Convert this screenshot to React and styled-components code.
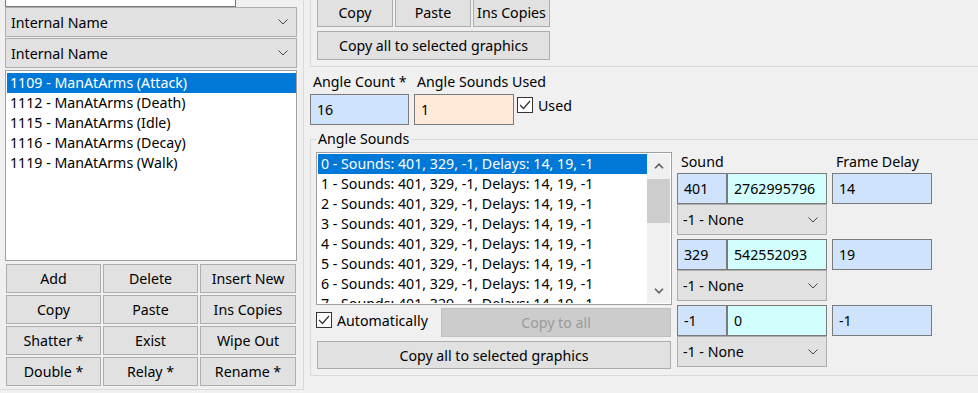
import React from 'react';
import styled, { createGlobalStyle } from 'styled-components';

const graphics = [
    '1109 - ManAtArms (Attack)',
    '1112 - ManAtArms (Death)',
    '1115 - ManAtArms (Idle)',
    '1116 - ManAtArms (Decay)',
    '1119 - ManAtArms (Walk)',
];

const angleSounds = Array.from({ length: 8 }, (_, i) => `${i} - Sounds: 401, 329, -1, Delays: 14, 19, -1`);

const soundEntries = [
    { id: '401', hash: '2762995796', delay: '14' },
    { id: '329', hash: '542552093', delay: '19' },
    { id: '-1', hash: '0', delay: '-1' },
];

const graphicButtons = ['Add', 'Delete', 'Insert New', 'Copy', 'Paste', 'Ins Copies', 'Shatter *', 'Exist', 'Wipe Out', 'Double *', 'Relay *', 'Rename *'];

const Chevron = () => (
    <svg width="10" height="6" viewBox="0 0 10 6">
        <path d="M0.5 0.5 L5 5 L9.5 0.5" fill="none" stroke="#444" strokeWidth="1" />
    </svg>
);

const ArrowIcon = ({ up }) => (
    <svg width="10" height="6" viewBox="0 0 10 6">
        <path d={up ? 'M1 5.2 L5 1.2 L9 5.2' : 'M1 0.8 L5 4.8 L9 0.8'} fill="none" stroke="#606060" strokeWidth="1.6" />
    </svg>
);

const CheckMark = () => (
    <svg width="14" height="14" viewBox="0 0 14 14">
        <path d="M2 7 L5.5 10.5 L12 3" fill="none" stroke="#333" strokeWidth="1.2" />
    </svg>
);

const App = () => {
    return (
        <>
            <GlobalStyle />
            <Screen>
                <LeftPanel>
                    <NameBox />
                    <Select $w={292} $h={30}>Internal Name<Chevron /></Select>
                    <Select $w={292} $h={30} $mt={1}>Internal Name<Chevron /></Select>
                    <GraphicList>
                        {graphics.map((g, i) => (
                            <ListItem key={g} $selected={i === 0}>{g}</ListItem>
                        ))}
                    </GraphicList>
                    <ButtonGrid>
                        {graphicButtons.map((b) => (
                            <Button key={b}>{b}</Button>
                        ))}
                    </ButtonGrid>
                </LeftPanel>

                <RightArea>
                    <TopGroup>
                        <TopButtons>
                            <Button>Copy</Button>
                            <Button>Paste</Button>
                            <Button>Ins Copies</Button>
                        </TopButtons>
                        <Button $w={233}>Copy all to selected graphics</Button>
                    </TopGroup>

                    <AngleRow>
                        <LabeledField $w={99}>
                            <FieldLabel>Angle Count *</FieldLabel>
                            <Field $w={99} $bg="#cfe3fc">16</Field>
                        </LabeledField>
                        <LabeledField $w={100}>
                            <FieldLabel>Angle Sounds Used</FieldLabel>
                            <Field $w={100} $bg="#ffe9d8">1</Field>
                        </LabeledField>
                        <CheckLabel $mt={25} $ml={-2}>
                            <CheckBox><CheckMark /></CheckBox>
                            Used
                        </CheckLabel>
                    </AngleRow>

                    <Group>
                        <Legend>Angle Sounds</Legend>
                        <GroupBody>
                            <SoundsColumn>
                                <SoundList>
                                    <ListItems>
                                        {angleSounds.map((s, i) => (
                                            <ListItem key={i} $selected={i === 0}>{s}</ListItem>
                                        ))}
                                    </ListItems>
                                    <ScrollTrack>
                                        <ScrollArrow><ArrowIcon up /></ScrollArrow>
                                        <ScrollThumb />
                                        <ScrollSpacer />
                                        <ScrollArrow><ArrowIcon /></ScrollArrow>
                                    </ScrollTrack>
                                </SoundList>
                                <CheckRow>
                                    <CheckLabel $mt={4}>
                                        <CheckBox><CheckMark /></CheckBox>
                                        Automatically
                                    </CheckLabel>
                                    <Button $w={230} $disabled>Copy to all</Button>
                                </CheckRow>
                                <Button $w={354} $h={28} $ml={1} $mt={4}>Copy all to selected graphics</Button>
                            </SoundsColumn>

                            <EntryColumn>
                                <EntryHeader>
                                    <span>Sound</span>
                                    <span>Frame Delay</span>
                                </EntryHeader>
                                {soundEntries.map((e) => (
                                    <Entry key={e.id}>
                                        <EntryInputs>
                                            <Field $w={50} $bg="#cfe3fc">{e.id}</Field>
                                            <Field $w={100} $bg="#d3fefe">{e.hash}</Field>
                                            <Field $w={100} $bg="#cfe3fc" $ml={5}>{e.delay}</Field>
                                        </EntryInputs>
                                        <Select $w={150} $h={31}>-1 - None<Chevron /></Select>
                                    </Entry>
                                ))}
                            </EntryColumn>
                        </GroupBody>
                    </Group>
                </RightArea>
            </Screen>
        </>
    );
};

const GlobalStyle = createGlobalStyle`
    *, *::before, *::after { box-sizing: border-box; }
    html, body {
        margin: 0;
        padding: 0;
        background: #f0f0f0;
        overflow: hidden;
    }
    body {
        font-family: "Noto Sans", "Open Sans", sans-serif;
        font-size: 14.2px;
        color: #000;
    }
`;

const Screen = styled.div`
    display: flex;
    width: 978px;
    height: 393px;
    overflow: hidden;
    background: #f0f0f0;
`;

const LeftPanel = styled.div`
    flex: none;
    width: 304px;
    height: 390px;
    padding-left: 5px;
    display: flex;
    flex-direction: column;
    border-right: 1px solid #d9d9d9;
    border-bottom: 1px solid #d9d9d9;
`;

const NameBox = styled.div`
    flex: none;
    width: 231px;
    height: 25px;
    margin-top: -18px;
    background: #fff;
    border: 1px solid #7a7a7a;
`;

const Select = styled.div`
    flex: none;
    display: flex;
    align-items: center;
    justify-content: space-between;
    width: ${(p) => p.$w}px;
    height: ${(p) => p.$h}px;
    margin-top: ${(p) => p.$mt || 0}px;
    padding: 0 8px 0 5px;
    background: #e1e1e1;
    border: 1px solid #adadad;
    white-space: nowrap;
`;

const GraphicList = styled.div`
    flex: none;
    width: 292px;
    height: 191px;
    margin-top: 2px;
    padding: 2px 0 0 1px;
    background: #fff;
    border: 1px solid #a0a0a0;
    overflow: hidden;
`;

const ListItem = styled.div`
    height: 20px;
    line-height: 20px;
    padding-left: 3px;
    white-space: nowrap;
    background: ${(p) => (p.$selected ? '#0078d7' : 'transparent')};
    color: ${(p) => (p.$selected ? '#fff' : '#000')};
`;

const ButtonGrid = styled.div`
    display: grid;
    grid-template-columns: 95px 95px 96px;
    grid-auto-rows: 29px;
    gap: 2px;
    margin: 3px 0 0 1px;
`;

const Button = styled.div`
    flex: none;
    display: flex;
    align-items: center;
    justify-content: center;
    width: ${(p) => (p.$w ? `${p.$w}px` : 'auto')};
    height: ${(p) => p.$h || 29}px;
    margin-left: ${(p) => p.$ml || 0}px;
    margin-top: ${(p) => p.$mt || 0}px;
    background: ${(p) => (p.$disabled ? '#cccccc' : '#e1e1e1')};
    border: 1px solid ${(p) => (p.$disabled ? '#bfbfbf' : '#adadad')};
    color: ${(p) => (p.$disabled ? '#9a9a9a' : '#000')};
    white-space: nowrap;
`;

const RightArea = styled.div`
    flex: 1;
    min-width: 0;
    padding-left: 6px;
    display: flex;
    flex-direction: column;
`;

const TopGroup = styled.div`
    flex: none;
    margin-top: -2px;
    padding: 0 0 6px 6px;
    border-left: 1px solid #d9d9d9;
    border-bottom: 1px solid #d9d9d9;
    display: flex;
    flex-direction: column;
    gap: 4px;
`;

const TopButtons = styled.div`
    display: grid;
    grid-template-columns: 76px 76px 77px;
    gap: 2px;
`;

const AngleRow = styled.div`
    display: flex;
    align-items: flex-start;
    gap: 5px;
    padding-top: 5px;
`;

const LabeledField = styled.div`
    flex: none;
    width: ${(p) => p.$w}px;
    display: flex;
    flex-direction: column;
`;

const FieldLabel = styled.div`
    height: 22px;
    line-height: 20px;
    padding-left: 3px;
    white-space: nowrap;
    overflow: visible;
`;

const Field = styled.div`
    flex: none;
    display: flex;
    align-items: center;
    width: ${(p) => p.$w}px;
    height: 31px;
    margin-left: ${(p) => p.$ml || 0}px;
    padding-left: 6px;
    background: ${(p) => p.$bg};
    border: 1px solid #7a7a7a;
    white-space: nowrap;
`;

const CheckLabel = styled.div`
    display: flex;
    align-items: center;
    gap: 5px;
    margin-top: ${(p) => p.$mt || 0}px;
    margin-left: ${(p) => p.$ml || 0}px;
    height: 16px;
    white-space: nowrap;
`;

const CheckBox = styled.span`
    flex: none;
    width: 16px;
    height: 16px;
    display: flex;
    align-items: center;
    justify-content: center;
    background: #fff;
    border: 1px solid #333;
`;

const Group = styled.fieldset`
    margin: 4px 0 0 0;
    padding: 3px 0 6px 5px;
    border: 1px solid #d9d9d9;
    border-right: none;
    min-width: 0;
`;

const Legend = styled.legend`
    padding: 0 2px;
    line-height: 20px;
`;

const GroupBody = styled.div`
    display: flex;
    gap: 5px;
`;

const SoundsColumn = styled.div`
    flex: none;
    width: 356px;
    display: flex;
    flex-direction: column;
`;

const SoundList = styled.div`
    display: flex;
    height: 153px;
    padding: 1px;
    background: #fff;
    border: 1px solid #a0a0a0;
    overflow: hidden;
`;

const ListItems = styled.div`
    flex: 1;
    min-width: 0;
    overflow: hidden;
`;

const ScrollTrack = styled.div`
    flex: none;
    width: 23px;
    display: flex;
    flex-direction: column;
    background: #f0f0f0;
`;

const ScrollArrow = styled.div`
    height: 24px;
    display: flex;
    align-items: center;
    justify-content: center;
`;

const ScrollThumb = styled.div`
    height: 44px;
    margin-top: 1px;
    background: #cdcdcd;
`;

const ScrollSpacer = styled.div`
    flex: 1;
`;

const CheckRow = styled.div`
    display: flex;
    align-items: flex-start;
    justify-content: space-between;
    margin-top: 3px;
    padding-right: 1px;
`;

const EntryColumn = styled.div`
    display: flex;
    flex-direction: column;
    gap: 4px;
`;

const EntryHeader = styled.div`
    display: grid;
    grid-template-columns: 155px 100px;
    height: 21px;
    line-height: 20px;
    margin-bottom: -4px;

    & > span {
        padding-left: 4px;
    }
`;

const Entry = styled.div`
    display: flex;
    flex-direction: column;
`;

const EntryInputs = styled.div`
    display: flex;
`;

export default App;
